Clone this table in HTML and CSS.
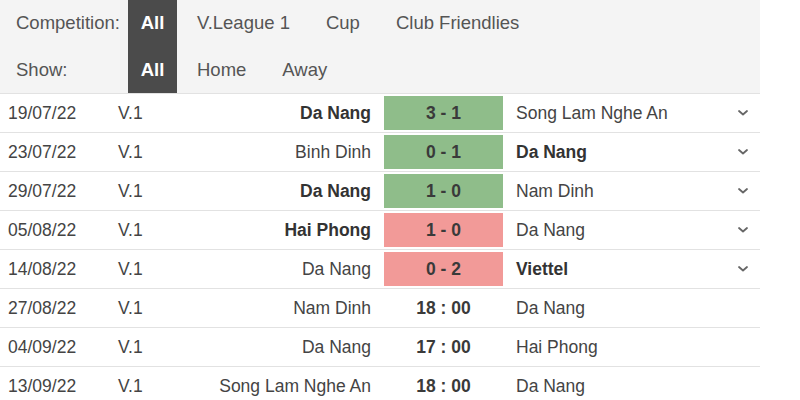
FILE: index.html
```html
<!DOCTYPE html>
<html>
<head>
<meta charset="utf-8">
<link rel="stylesheet" href="styles.css">
</head>
<body>
<div class="wrap">
  <div class="filters">
    <div class="frow">
      <span class="flabel">Competition:</span>
      <span class="fitem active">All</span>
      <span class="fitem">V.League 1</span>
      <span class="fitem">Cup</span>
      <span class="fitem">Club Friendlies</span>
    </div>
    <div class="frow">
      <span class="flabel">Show:</span>
      <span class="fitem active">All</span>
      <span class="fitem">Home</span>
      <span class="fitem">Away</span>
    </div>
  </div>
  <div class="matches">
    <div class="row">
      <span class="date">19/07/22</span><span class="lg">V.1</span>
      <span class="home b">Da Nang</span><span class="score win">3 - 1</span>
      <span class="away">Song Lam Nghe An</span>
      <span class="chev"><svg width="12" height="8" viewBox="0 0 12 8"><path d="M2 2l4 3.5L10 2" fill="none" stroke="#666" stroke-width="1.8" stroke-linecap="round" stroke-linejoin="round"/></svg></span>
    </div>
    <div class="row">
      <span class="date">23/07/22</span><span class="lg">V.1</span>
      <span class="home">Binh Dinh</span><span class="score win">0 - 1</span>
      <span class="away b">Da Nang</span>
      <span class="chev"><svg width="12" height="8" viewBox="0 0 12 8"><path d="M2 2l4 3.5L10 2" fill="none" stroke="#666" stroke-width="1.8" stroke-linecap="round" stroke-linejoin="round"/></svg></span>
    </div>
    <div class="row">
      <span class="date">29/07/22</span><span class="lg">V.1</span>
      <span class="home b">Da Nang</span><span class="score win">1 - 0</span>
      <span class="away">Nam Dinh</span>
      <span class="chev"><svg width="12" height="8" viewBox="0 0 12 8"><path d="M2 2l4 3.5L10 2" fill="none" stroke="#666" stroke-width="1.8" stroke-linecap="round" stroke-linejoin="round"/></svg></span>
    </div>
    <div class="row">
      <span class="date">05/08/22</span><span class="lg">V.1</span>
      <span class="home b">Hai Phong</span><span class="score loss">1 - 0</span>
      <span class="away">Da Nang</span>
      <span class="chev"><svg width="12" height="8" viewBox="0 0 12 8"><path d="M2 2l4 3.5L10 2" fill="none" stroke="#666" stroke-width="1.8" stroke-linecap="round" stroke-linejoin="round"/></svg></span>
    </div>
    <div class="row">
      <span class="date">14/08/22</span><span class="lg">V.1</span>
      <span class="home">Da Nang</span><span class="score loss">0 - 2</span>
      <span class="away b">Viettel</span>
      <span class="chev"><svg width="12" height="8" viewBox="0 0 12 8"><path d="M2 2l4 3.5L10 2" fill="none" stroke="#666" stroke-width="1.8" stroke-linecap="round" stroke-linejoin="round"/></svg></span>
    </div>
    <div class="row">
      <span class="date">27/08/22</span><span class="lg">V.1</span>
      <span class="home">Nam Dinh</span><span class="score">18 : 00</span>
      <span class="away">Da Nang</span><span class="chev"></span>
    </div>
    <div class="row">
      <span class="date">04/09/22</span><span class="lg">V.1</span>
      <span class="home">Da Nang</span><span class="score">17 : 00</span>
      <span class="away">Hai Phong</span><span class="chev"></span>
    </div>
    <div class="row">
      <span class="date">13/09/22</span><span class="lg">V.1</span>
      <span class="home">Song Lam Nghe An</span><span class="score">18 : 00</span>
      <span class="away">Da Nang</span><span class="chev"></span>
    </div>
  </div>
</div>
</body>
</html>
```
FILE: styles.css
```css
html, body {
  margin: 0;
  padding: 0;
  background: #fff;
}
body {
  font-family: "Liberation Sans", Arial, sans-serif;
  color: #444;
}
.wrap {
  width: 760px;
}
.filters {
  background: #f4f4f4;
  border-bottom: 1px solid #e2e2e2;
}
.frow {
  display: flex;
  align-items: stretch;
  height: 46px;
  font-size: 18.5px;
  color: #555;
}
.frow:first-child {
  height: 46px;
}
.frow:last-child {
  height: 47px;
}
.flabel {
  width: 112px;
  padding-left: 16px;
  display: flex;
  align-items: center;
}
.fitem {
  display: flex;
  align-items: center;
  padding: 0 18px;
}
.fitem.active {
  background: #4b4b4b;
  color: #fff;
  font-weight: bold;
  width: 49px;
  padding: 0;
  justify-content: center;
  margin-right: 2px;
}
.row {
  display: grid;
  grid-template-columns: 110px 60px 193px 119px 1fr 34px;
  align-items: center;
  height: 38px;
  padding-left: 8px;
  border-bottom: 1px solid #e2e2e2;
  font-size: 17.5px;
  color: #444;
}
.home {
  text-align: right;
  white-space: nowrap;
}
.score {
  margin-left: 13px;
  width: 119px;
  height: 34px;
  display: flex;
  align-items: center;
  justify-content: center;
  font-weight: bold;
  color: #3a3a3a;
}
.score.win {
  background: #8fbd8a;
}
.score.loss {
  background: #f29a98;
}
.away {
  padding-left: 26px;
  white-space: nowrap;
}
.b {
  font-weight: bold;
  color: #333;
}
.chev {
  display: flex;
  align-items: center;
  justify-content: center;
}
.chev svg {
  display: block;
}
```
